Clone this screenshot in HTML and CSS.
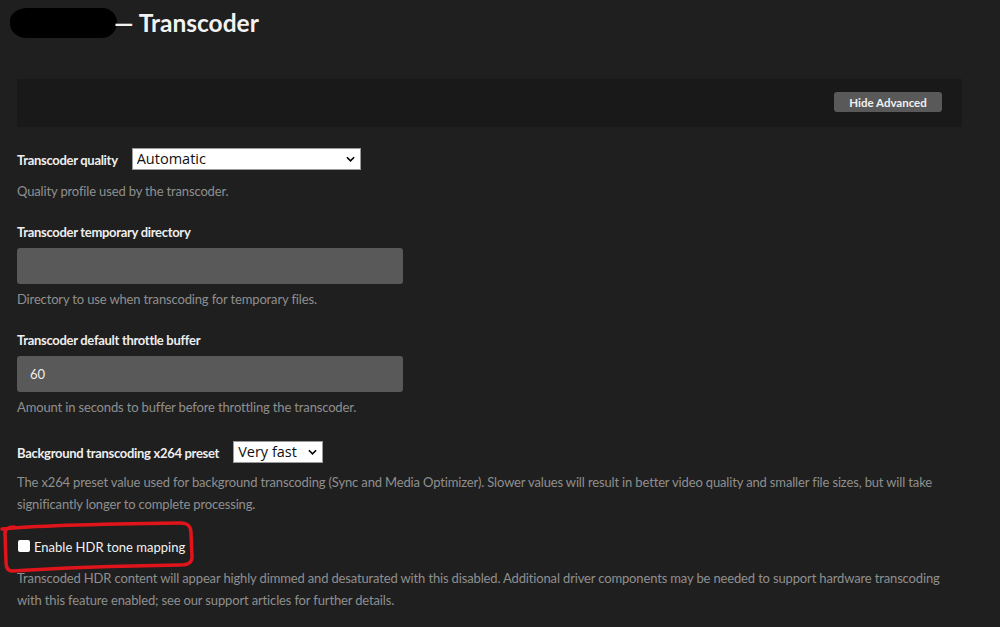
FILE: index.html
```html
<!DOCTYPE html>
<html lang="en">
<head>
<meta charset="utf-8">
<title>Transcoder</title>
<link rel="stylesheet" href="styles.css">
</head>
<body>
<div class="page">
  <header class="title-row">
    <span class="redact"></span>
    <h1 class="title">— Transcoder</h1>
  </header>

  <div class="toolbar">
    <button class="btn" type="button">Hide Advanced</button>
  </div>

  <form class="settings">
    <div class="group">
      <div class="inline-row">
        <label class="label" for="q">Transcoder quality</label>
        <span class="select-wrap select-wide">
          <select id="q" class="select"><option>Automatic</option></select>
          <svg class="chev" viewBox="0 0 10 6" width="9" height="6"><path d="M1 1l4 4 4-4" fill="none" stroke="#000" stroke-width="1.8"/></svg>
        </span>
      </div>
      <p class="help help-inline">Quality profile used by the transcoder.</p>
    </div>

    <div class="group">
      <label class="label block" for="tmp">Transcoder temporary directory</label>
      <input id="tmp" class="input" type="text" value="">
      <p class="help">Directory to use when transcoding for temporary files.</p>
    </div>

    <div class="group">
      <label class="label block" for="thr">Transcoder default throttle buffer</label>
      <input id="thr" class="input" type="text" value="60">
      <p class="help">Amount in seconds to buffer before throttling the transcoder.</p>
    </div>

    <div class="group group-preset">
      <div class="inline-row">
        <label class="label" for="p">Background transcoding x264 preset</label>
        <span class="select-wrap select-narrow">
          <select id="p" class="select"><option>Very fast</option></select>
          <svg class="chev" viewBox="0 0 10 6" width="9" height="6"><path d="M1 1l4 4 4-4" fill="none" stroke="#000" stroke-width="1.8"/></svg>
        </span>
      </div>
      <p class="help help-tight">The x264 preset value used for background transcoding (Sync and Media Optimizer). Slower values will result in better video quality and smaller file sizes, but will take significantly longer to complete processing.</p>
    </div>

    <div class="group group-check">
      <div class="check-row">
        <input id="hdr" class="check" type="checkbox">
        <label class="check-label" for="hdr">Enable HDR tone mapping</label>
        <svg class="annot" viewBox="0 0 200 60" width="200" height="60"><path d="M2,12 C30,9 100,7 180,6 C188,6 191,9 191,16 L192,40 C192,46 188,48 180,48 C120,49 60,51 12,54 C7,54 6,50 6,45 L5,16 C5,12 8,10 14,10" fill="none" stroke="#e0141b" stroke-width="3.5" stroke-linecap="round" stroke-linejoin="round"/></svg>
      </div>
      <p class="help help-inline">Transcoded HDR content will appear highly dimmed and desaturated with this disabled. Additional driver components may be needed to support hardware transcoding with this feature enabled; see our support articles for further details.</p>
    </div>
  </form>
</div>
</body>
</html>
```

FILE: styles.css
```css
* { box-sizing: border-box; }

html, body {
  margin: 0;
  background: #1f1f1f;
  height: 100%;
}

body {
  font-family: Lato, "Open Sans", "Liberation Sans", sans-serif;
  color: #eeeeee;
  overflow: hidden;
}

.page {
  padding: 0 38px 0 17px;
}

.title-row {
  display: flex;
  align-items: center;
  height: 79px;
  padding-bottom: 35px;
  padding-top: 2px;
}

.redact {
  display: inline-block;
  width: 107px;
  height: 30px;
  background: #000;
  border-radius: 18px 15px 16px 17px / 13px 15px 16px 15px;
  margin-left: -7px;
  flex: none;
}

.title {
  margin: 0 0 0 -3px;
  font-size: 24.5px;
  font-weight: 700;
  color: #f2f2f2;
  line-height: 30px;
}

.toolbar {
  height: 48px;
  background: #191919;
  display: flex;
  align-items: center;
  justify-content: flex-end;
  padding-right: 20px;
}

.btn {
  font-family: inherit;
  font-size: 11.5px;
  font-weight: 700;
  color: #f0f0f0;
  background: #595959;
  border: 0;
  border-radius: 3px;
  height: 20px;
  width: 108px;
  padding: 0;
  margin-top: -2px;
}

.settings {
  padding-top: 21px;
}

.group {
  margin-bottom: 20px;
}

.group-preset {
  margin-top: 23px;
}

.group-check {
  padding-top: 2px;
}

.inline-row {
  display: flex;
  align-items: center;
  height: 22px;
}

.label {
  font-size: 13px;
  font-weight: 700;
  letter-spacing: -0.3px;
  color: #eeeeee;
  line-height: 20px;
  margin-top: 2px;
}

.label.block {
  display: block;
  margin-top: 0;
}

.select-wrap {
  position: relative;
  display: inline-block;
  margin-left: 14px;
  height: 22px;
}

.select-wide { width: 229px; }
.select-narrow { width: 90px; }

.select {
  appearance: none;
  -webkit-appearance: none;
  width: 100%;
  height: 22px;
  background: #fff;
  border: 1px solid #9a9a9a;
  border-radius: 0;
  font-family: "Open Sans", "Liberation Sans", sans-serif;
  font-size: 14.5px;
  color: #111;
  padding: 0 0 0 4px;
  line-height: 20px;
}

.chev {
  position: absolute;
  right: 6px;
  top: 8px;
  pointer-events: none;
}

.input {
  display: block;
  width: 386px;
  height: 36px;
  margin-top: 6px;
  background: #595959;
  border: 0;
  border-radius: 3px;
  font-family: inherit;
  font-size: 13px;
  color: #eeeeee;
  padding: 0 13px;
}

.help {
  margin: 4px 0 0;
  font-size: 13px;
  letter-spacing: -0.15px;
  line-height: 22px;
  color: #8f8f8f;
}

.help-inline {
  margin-top: 10px;
}

.help-tight {
  margin-top: 8px;
}

.check-row {
  position: relative;
  display: flex;
  align-items: center;
  height: 20px;
}

.check {
  appearance: none;
  -webkit-appearance: none;
  width: 12px;
  height: 12px;
  margin: -3px 4px 0 1px;
  background: #fff;
  border-radius: 2px;
  border: 0;
}

.check-label {
  font-size: 13px;
  color: #f2f2f2;
}

.annot {
  position: absolute;
  left: -17px;
  top: -20px;
  pointer-events: none;
}
```
